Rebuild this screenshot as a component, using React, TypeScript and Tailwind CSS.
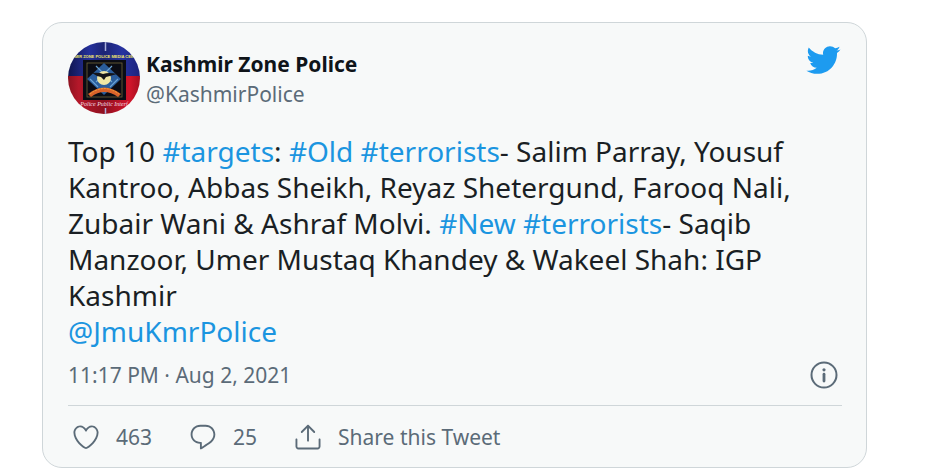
import type { ReactNode } from 'react';

const HEART =
  'M12 21.638h-.014C9.403 21.59 1.95 14.856 1.95 8.478c0-3.064 2.525-5.754 5.403-5.754 2.29 0 3.83 1.58 4.646 2.73.814-1.148 2.354-2.73 4.645-2.73 2.88 0 5.404 2.69 5.404 5.755 0 6.376-7.454 13.11-10.037 13.157H12zM7.354 4.225c-2.08 0-3.903 1.988-3.903 4.255 0 5.74 7.034 11.596 8.55 11.658 1.518-.062 8.55-5.917 8.55-11.658 0-2.267-1.823-4.255-3.903-4.255-2.528 0-3.94 2.936-3.952 2.965-.23.562-1.156.562-1.387 0-.014-.03-1.425-2.965-3.954-2.965z';
const REPLY =
  'M14.046 2.242l-4.148-.01h-.002c-4.374 0-7.8 3.427-7.8 7.802 0 4.098 3.186 7.206 7.465 7.37v3.828c0 .108.044.286.12.403.142.225.384.347.632.347.138 0 .277-.038.402-.118.264-.168 6.473-4.14 8.088-5.506 1.902-1.61 3.04-3.97 3.043-6.312v-.017c-.006-4.367-3.43-7.787-7.8-7.788zm3.787 12.972c-1.134.96-4.862 3.405-6.772 4.643V16.67c0-.414-.335-.75-.75-.75h-.396c-3.66 0-6.318-2.476-6.318-5.886 0-3.534 2.768-6.302 6.3-6.302l4.147.01h.002c3.532 0 6.3 2.766 6.302 6.296-.003 1.91-.942 3.844-2.514 5.176z';
const SHARE =
  'M17.53 7.47l-5-5c-.293-.293-.768-.293-1.06 0l-5 5c-.294.293-.294.768 0 1.06s.767.294 1.06 0l3.72-3.72V15c0 .414.336.75.75.75s.75-.336.75-.75V4.81l3.72 3.72c.146.147.338.22.53.22s.384-.072.53-.22c.293-.293.293-.767 0-1.06zM19.708 21.944H4.292C3.028 21.944 2 20.916 2 19.652V14c0-.414.336-.75.75-.75s.75.336.75.75v5.652c0 .437.355.792.792.792h15.416c.437 0 .792-.355.792-.792V14c0-.414.336-.75.75-.75s.75.336.75.75v5.652c0 1.264-1.028 2.292-2.292 2.292z';
const BIRD =
  'M23.643 4.937c-.835.37-1.732.62-2.675.733.962-.576 1.7-1.49 2.048-2.578-.9.534-1.897.922-2.958 1.13-.85-.904-2.06-1.47-3.4-1.47-2.572 0-4.658 2.086-4.658 4.66 0 .364.042.718.12 1.06-3.873-.195-7.304-2.05-9.602-4.868-.4.69-.63 1.49-.63 2.342 0 1.616.823 3.043 2.072 3.878-.764-.025-1.482-.234-2.11-.583v.06c0 2.257 1.605 4.14 3.737 4.568-.392.106-.803.162-1.227.162-.3 0-.593-.028-.877-.082.593 1.85 2.313 3.198 4.352 3.234-1.595 1.25-3.604 1.995-5.786 1.995-.376 0-.747-.022-1.112-.065 2.062 1.323 4.51 2.093 7.14 2.093 8.57 0 13.255-7.098 13.255-13.254 0-.2-.005-.402-.014-.602.91-.658 1.7-1.477 2.323-2.41z';

const Avatar = () => (
  <svg viewBox="0 0 72 72" className="size-18 shrink-0 rounded-full" aria-hidden="true">
    <defs>
      <linearGradient id="blue" x1="0" x2="1">
        <stop offset="0" stopColor="#10154f" />
        <stop offset="0.3" stopColor="#25309b" />
        <stop offset="0.5" stopColor="#1c2474" />
        <stop offset="0.75" stopColor="#2733a0" />
        <stop offset="1" stopColor="#1b237c" />
      </linearGradient>
      <linearGradient id="red" x1="0" x2="1">
        <stop offset="0" stopColor="#8d1220" />
        <stop offset="0.15" stopColor="#b5182a" />
        <stop offset="0.5" stopColor="#8f1020" />
        <stop offset="0.85" stopColor="#d3152b" />
        <stop offset="1" stopColor="#a50f20" />
      </linearGradient>
    </defs>
    <rect width="72" height="35" fill="url(#blue)" />
    <rect y="34" width="72" height="38" fill="url(#red)" />
    <path d="M37.5 0V9M37.5 66V72" stroke="#a9b0dc" strokeWidth="1.5" />
    <rect x="15" y="18" width="43" height="40" fill="#0b0c14" />
    <rect x="19" y="21" width="35" height="34" fill="none" stroke="#71643a" strokeWidth="0.8" />
    <path d="M36 21L53 37L36 53L19 37Z" fill="#2a5d9c" />
    <path d="M28 24L44 40M44 24L28 40M22 37L30 45M50 37L42 45" stroke="#6ba3d4" strokeWidth="1.2" />
    <circle cx="36" cy="36" r="7" fill="#efe6a4" />
    <path d="M24 31Q31 30 35 32Q41 30 49 32Q42 34 38 35L36 38L33 35Q28 34 24 31Z" fill="#14151a" />
    <path d="M20 52Q36 39 53 52L50 55Q36 45 23 55Z" fill="#d9622b" />
    <path d="M22 52Q36 41 51 52" fill="none" stroke="#f0a33c" strokeWidth="1" strokeDasharray="2 1" />
    <text x="36" y="16" textAnchor="middle" fontSize="4" fontWeight="700" fill="#f4e96a" className="font-['Liberation_Sans_Narrow','Liberation_Sans',sans-serif]">
      HMIR ZONE POLICE MEDIA CENT
    </text>
    <text x="36" y="64" textAnchor="middle" fontSize="6" fontStyle="italic" fill="#f3dfe4" className="font-['Liberation_Serif',serif]">
      Police Public Interf
    </text>
  </svg>
);

const Enlace = ({ children }: { children: ReactNode }) => (
  <a href="#" className="text-[#1b95e0] hover:underline">{children}</a>
);

const Accion = ({ icono, texto, label }: { icono: string; texto: string; label: string }) => (
  <button type="button" aria-label={label} className="flex items-center gap-[15px] hover:underline">
    <svg viewBox="0 0 24 24" className="size-[30px] shrink-0" fill="currentColor" aria-hidden="true">
      <path d={icono} />
    </svg>
    <span>{texto}</span>
  </button>
);

export default function App() {
  return (
    <main className="bg-white pt-[22px] pr-[73px] pl-[42px] font-['Noto_Sans','Open_Sans',sans-serif]">
      <article className="rounded-[20px] border border-[#cfd6d9] bg-[#f7f9f9] pt-[19px] pr-6 pb-3 pl-[25px] text-[21px] text-[#5b6b78]">
        <header className="flex items-start">
          <Avatar />
          <div className="ml-1.5 flex-1 pt-[7px] leading-[30px]">
            <a href="#" className="block font-bold text-[#0f1419]">Kashmir Zone Police</a>
            <a href="#" className="block">@KashmirPolice</a>
          </div>
          <a href="#" aria-label="View on Twitter" className="mr-px text-[#1d9bf0]">
            <svg viewBox="0 0 24 24" className="size-9" fill="currentColor" aria-hidden="true">
              <path d={BIRD} />
            </svg>
          </a>
        </header>

        <p className="mt-[19px] text-[28px] leading-9 text-[#1a1f24]">
          Top 10 <Enlace>#targets</Enlace>: <Enlace>#Old</Enlace> <Enlace>#terrorists</Enlace>- Salim Parray, Yousuf
          Kantroo, Abbas Sheikh, Reyaz Shetergund, Farooq Nali, Zubair Wani &amp; Ashraf Molvi.{' '}
          <Enlace>#New</Enlace> <Enlace>#terrorists</Enlace>- Saqib Manzoor, Umer Mustaq Khandey &amp; Wakeel Shah: IGP
          Kashmir
          <br />
          <Enlace>@JmuKmrPolice</Enlace>
        </p>

        <div className="mt-2 flex items-center justify-between border-b border-[#cfd6d9] pb-3">
          <a href="#" className="leading-9">11:17 PM · Aug 2, 2021</a>
          <button type="button" aria-label="Twitter Ads info and privacy" className="mr-1">
            <svg viewBox="0 0 28 28" className="size-7" aria-hidden="true">
              <circle cx="14" cy="14" r="12.5" fill="none" stroke="currentColor" strokeWidth="2" />
              <circle cx="14" cy="8.8" r="1.6" fill="currentColor" />
              <path d="M14 13.2V20" stroke="currentColor" strokeWidth="2.8" strokeLinecap="round" />
            </svg>
          </button>
        </div>

        <footer className="mt-[13px] ml-[3px] flex items-center gap-9 leading-9">
          <Accion icono={HEART} texto="463" label="463 likes" />
          <Accion icono={REPLY} texto="25" label="25 replies" />
          <Accion icono={SHARE} texto="Share this Tweet" label="Share this Tweet" />
        </footer>
      </article>
    </main>
  );
}
